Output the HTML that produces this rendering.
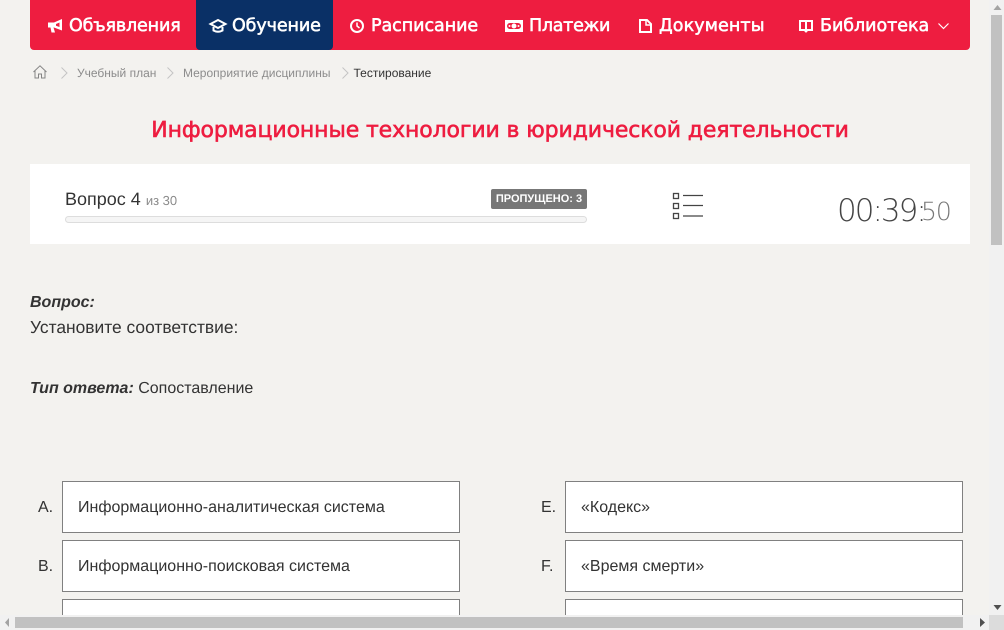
<!DOCTYPE html>
<html lang="ru"><head><meta charset="utf-8"><style>
html,body{margin:0;padding:0;width:1004px;height:630px;overflow:hidden;background:#f3f2ef}
body{position:relative;font-family:"Liberation Sans",sans-serif;color:#333;text-rendering:geometricPrecision}
.a{position:absolute;white-space:nowrap}
.nav{font-family:"DejaVu Sans",sans-serif;font-size:17.5px;color:#fff;line-height:24px;top:14px;-webkit-text-stroke:.55px #fff}
.bc{font-size:12px;line-height:16px;top:65px;color:#8c8c8c}
.box{position:absolute;width:396px;height:50px;background:#fff;border:1px solid #808080;box-sizing:content-box}
.t{font-size:16px;line-height:20px;color:#333}
svg{position:absolute;overflow:visible}
</style></head><body>
<div class="a" style="left:30px;top:0;width:940px;height:50px;background:#ee1d40;border-radius:0 0 4px 4px"></div>
<div class="a" style="left:196px;top:0;width:137px;height:50px;background:#0a3066;border-radius:0 0 4px 4px"></div>

<svg style="left:48px;top:19px" width="15" height="15" viewBox="0 0 15 15" fill="#fff"><path d="M0 3.500h6L14 0V11.500L6 8.500H5.500L7 13.500H3.500L2.500 8.500H0z"/><path d="M11.500 3.500v4.500L8 6.800V5z" fill="#ee1d40"/></svg>
<div class="a nav" style="left:69px;letter-spacing:-.15px">Объявления</div>
<svg style="left:209px;top:17px" width="18" height="16" viewBox="0 0 18 16" fill="none" stroke="#fff" stroke-width="2"><path d="M9 3 1.500 7 9 11l7.500-4z"/><path d="M4.500 10v3.500q4.500 2.500 9 0V10"/></svg>
<div class="a nav" style="left:232px;letter-spacing:-.1px">Обучение</div>
<svg style="left:349px;top:18px" width="16" height="16" viewBox="0 0 16 16" fill="none" stroke="#fff" stroke-width="2"><circle cx="8" cy="8" r="6"/><path d="M8 4.500V8l2.500 2" stroke-width="1.500"/></svg>
<div class="a nav" style="left:371px;letter-spacing:-.05px">Расписание</div>
<svg style="left:505px;top:20px" width="18" height="12" viewBox="0 0 18 12"><rect width="18" height="12" fill="#fff"/><rect x="2" y="3" width="14" height="6" rx="3" fill="#ee1d40"/><circle cx="9" cy="6" r="2.500" fill="#fff"/><circle cx="4.500" cy="6" r="1" fill="#fff"/><circle cx="13.500" cy="6" r="1" fill="#fff"/></svg>
<div class="a nav" style="left:529px;letter-spacing:-.3px">Платежи</div>
<svg style="left:639px;top:19px" width="13" height="14" viewBox="0 0 13 14" fill="none" stroke="#fff" stroke-width="2"><path d="M1 1h7l4 4v8H1z"/><path d="M7 1v5h5" stroke-width="1.500"/></svg>
<div class="a nav" style="left:659px;letter-spacing:.1px">Документы</div>
<svg style="left:799px;top:19px" width="14" height="14" viewBox="0 0 14 14" fill="none" stroke="#fff" stroke-width="2"><path d="M7 2H1v9h4.500l1.500 1.500L8.500 11H13V2zV12"/></svg>
<div class="a nav" style="left:820px;letter-spacing:-.05px">Библиотека</div>
<svg style="left:938px;top:23px" width="11" height="7" viewBox="0 0 11 7" fill="none" stroke="#fff" stroke-width="1.200"><path d="M.500.500l5 5 5-5"/></svg>

<svg style="left:33px;top:65px" width="14" height="14" viewBox="0 0 14 14" fill="none" stroke="#858585" stroke-width="1"><path d="M.5 7 7 .8 13.500 7M2 6v7h3.500V9h3v4H12V6"/></svg>
<svg style="left:61px;top:67px" width="7" height="12" viewBox="0 0 7 12" fill="none" stroke="#c4c4c4"><path d="M.5.500 6 6 .5 11.500"/></svg>
<div class="a bc" style="left:77px">Учебный план</div>
<svg style="left:167px;top:67px" width="7" height="12" viewBox="0 0 7 12" fill="none" stroke="#c4c4c4"><path d="M.5.500 6 6 .5 11.500"/></svg>
<div class="a bc" style="left:183px">Мероприятие дисциплины</div>
<svg style="left:342px;top:67px" width="7" height="12" viewBox="0 0 7 12" fill="none" stroke="#c4c4c4"><path d="M.5.500 6 6 .5 11.500"/></svg>
<div class="a bc" style="left:353.500px;color:#333">Тестирование</div>

<div class="a" style="left:30px;width:940px;top:115px;text-align:center;font-family:'DejaVu Sans',sans-serif;font-size:22px;line-height:32px;color:#ee1d40;letter-spacing:-.12px;-webkit-text-stroke:.6px #ee1d40">Информационные технологии в юридической деятельности</div>

<div class="a" style="left:30px;top:164px;width:940px;height:80px;background:#fff"></div>
<div class="a" style="left:65px;top:187px;font-size:18px;line-height:24px;color:#333">Вопрос 4 <span style="font-size:13px;color:#8c8c8c">из 30</span></div>
<div class="a" style="left:491px;top:189px;width:96px;height:20px;background:#777;border-radius:2px;color:#fff;font-size:11px;font-weight:bold;line-height:21px;text-align:center">ПРОПУЩЕНО: 3</div>
<div class="a" style="left:65px;top:216px;width:522px;height:7px;box-sizing:border-box;background:#f5f5f5;border:1px solid #ddd;border-radius:4px"></div>
<svg style="left:672px;top:192px" width="32" height="29" viewBox="0 0 32 29" fill="none" stroke="#444"><rect x="1.500" y="1.500" width="5" height="5" stroke-width="1.300"/><rect x="1.500" y="11.500" width="5" height="5" stroke-width="1.300"/><rect x="1.500" y="21.500" width="5" height="5" stroke-width="1.300"/><path d="M11 3.500h20M11 13.500h20M11 24h20" stroke-width="1.200"/></svg>
<div class="a" style="left:837px;top:191px;font-family:'DejaVu Sans',sans-serif;font-weight:200;font-size:31px;line-height:40px;color:#444;letter-spacing:-2px">00:39:</div>
<div class="a" style="left:921px;top:192px;font-family:'DejaVu Sans',sans-serif;font-weight:200;font-size:25px;line-height:40px;color:#777;letter-spacing:-1px">50</div>

<div class="a" style="left:30px;top:293px;font-size:16px;line-height:20px;font-weight:bold;font-style:italic">Вопрос:</div>
<div class="a" style="left:30px;top:317px;font-size:17.400px;line-height:20px">Установите соответствие:</div>
<div class="a" style="left:30px;top:379px;font-size:16px;line-height:20px"><b><i>Тип ответа:</i></b> Сопоставление</div>

<div class="a t" style="left:38px;top:498px">A.</div>
<div class="box" style="left:62px;top:481px"></div><div class="a t" style="left:78px;top:498px">Информационно-аналитическая система</div>
<div class="a t" style="left:38px;top:557px">B.</div>
<div class="box" style="left:62px;top:540px"></div><div class="a t" style="left:78px;top:557px">Информационно-поисковая система</div>
<div class="box" style="left:62px;top:599px"></div>
<div class="a t" style="left:541px;top:498px">E.</div>
<div class="box" style="left:565px;top:481px"></div><div class="a t" style="left:581px;top:498px">«Кодекс»</div>
<div class="a t" style="left:541px;top:557px">F.</div>
<div class="box" style="left:565px;top:540px"></div><div class="a t" style="left:581px;top:557px">«Время смерти»</div>
<div class="box" style="left:565px;top:599px"></div>

<div class="a" style="left:989px;top:0;width:15px;height:615px;background:#f1f1f1"></div>
<div class="a" style="left:991px;top:15px;width:11px;height:230px;background:#c1c1c1"></div>
<svg style="left:993px;top:5px" width="9" height="5"><path d="M.5 5 4.500 0l4 5z" fill="#a3a3a3"/></svg>
<svg style="left:993px;top:605px" width="9" height="5"><path d="M.5 0 4.500 5l4-5z" fill="#505050"/></svg>
<div class="a" style="left:0;top:615px;width:989px;height:15px;background:#f1f1f1"></div>
<div class="a" style="left:15px;top:617px;width:948px;height:11px;background:#c1c1c1"></div>
<svg style="left:5px;top:618px" width="4" height="9"><path d="M4 0 0 4.500 4 9z" fill="#a3a3a3"/></svg>
<svg style="left:980px;top:618px" width="5" height="9"><path d="M0 0 5 4.500 0 9z" fill="#505050"/></svg>
<div class="a" style="left:989px;top:615px;width:15px;height:15px;background:#dcdcdc"></div>
</body></html>
